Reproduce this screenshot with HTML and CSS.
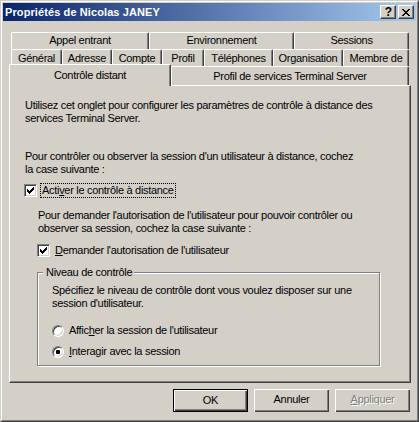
FILE: index.html
```html
<!DOCTYPE html>
<html lang="fr">
<head>
<meta charset="utf-8">
<title>Propriétés de Nicolas JANEY</title>
<link rel="stylesheet" href="styles.css">
</head>
<body>
<div class="window">
  <div class="frame">
    <div class="titlebar">
      <span class="title">Propriétés de Nicolas JANEY</span>
      <div class="caption-buttons">
        <span class="cap-btn help">?</span>
        <span class="cap-btn close"><svg width="8" height="7" viewBox="0 0 8 7"><path d="M0 0h2v1H0zM6 0h2v1H6zM1 1h2v1H1zM5 1h2v1H5zM2 2h4v1H2zM3 3h2v1H3zM2 4h4v1H2zM1 5h2v1H1zM5 5h2v1H5zM0 6h2v1H0zM6 6h2v1H6z" fill="#000"/></svg></span>
      </div>
    </div>
    <div class="client">
      <div class="tabs">
        <div class="tab-row row-back">
          <div class="tab t-appel">Appel entrant</div>
          <div class="tab t-env">Environnement</div>
          <div class="tab t-sessions">Sessions</div>
        </div>
        <div class="tab-row row-mid">
          <div class="tab t-general">Général</div>
          <div class="tab t-adresse">Adresse</div>
          <div class="tab t-compte">Compte</div>
          <div class="tab t-profil">Profil</div>
          <div class="tab t-tel">Téléphones</div>
          <div class="tab t-org">Organisation</div>
          <div class="tab t-membre">Membre de</div>
        </div>
        <div class="tab-row row-front">
          <div class="tab selected t-controle">Contrôle distant</div>
          <div class="tab front t-ts">Profil de services Terminal Server</div>
        </div>
      </div>
      <div class="panel">
        <p class="text p-intro">Utilisez cet onglet pour configurer les paramètres de contrôle à distance des<br>services Terminal Server.</p>
        <p class="text p-control">Pour contrôler ou observer la session d'un utilisateur à distance, cochez<br>la case suivante :</p>
        <div class="check-row row-enable">
          <span class="checkbox"><svg width="7" height="7" viewBox="0 0 7 7"><path d="M0 2h1v3H0zM1 3h1v3H1zM2 4h1v3H2zM3 3h1v3H3zM4 2h1v3H4zM5 1h1v3H5zM6 0h1v3H6z" fill="#000"/></svg></span>
          <span class="label focused">Acti<u>v</u>er le contrôle à distance</span>
        </div>
        <div class="indent">
          <p class="text p-ask">Pour demander l'autorisation de l'utilisateur pour pouvoir contrôler ou<br>observer sa session, cochez la case suivante :</p>
          <div class="check-row row-ask">
            <span class="checkbox"><svg width="7" height="7" viewBox="0 0 7 7"><path d="M0 2h1v3H0zM1 3h1v3H1zM2 4h1v3H2zM3 3h1v3H3zM4 2h1v3H4zM5 1h1v3H5zM6 0h1v3H6z" fill="#000"/></svg></span>
            <span class="label"><u>D</u>emander l'autorisation de l'utilisateur</span>
          </div>
          <div class="group">
            <div class="legend">Niveau de contrôle</div>
            <p class="text p-level">Spécifiez le niveau de contrôle dont vous voulez disposer sur une<br>session d'utilisateur.</p>
            <div class="radio-row row-view">
              <span class="radio"></span>
              <span class="rlabel">Affic<u>h</u>er la session de l'utilisateur</span>
            </div>
            <div class="radio-row row-interact">
              <span class="radio checked"></span>
              <span class="rlabel"><u>I</u>nteragir avec la session</span>
            </div>
          </div>
        </div>
      </div>
      <div class="buttons">
        <div class="btn default">OK</div>
        <div class="btn">Annuler</div>
        <div class="btn disabled"><span><u>A</u>ppliquer</span></div>
      </div>
    </div>
  </div>
</div>
</body>
</html>
```

FILE: styles.css
```css
* { box-sizing: border-box; }
html, body { margin: 0; padding: 0; background: #D4D0C8; }
body {
  font-family: "Liberation Sans", Arial, sans-serif;
  font-size: 11px;
  line-height: 13px;
  letter-spacing: -0.3px;
  color: #000;
}

.window {
  width: 419px;
  height: 422px;
  background: #D4D0C8;
  border: 1px solid;
  border-color: #D4D0C8 #404040 #404040 #D4D0C8;
}
.frame {
  height: 100%;
  border: 1px solid;
  border-color: #FFFFFF #808080 #808080 #FFFFFF;
  padding: 1px;
}

/* Title bar */
.titlebar {
  height: 18px;
  display: flex;
  align-items: flex-start;
  background: linear-gradient(to right, #0A246A, #A6CAF0);
  padding-left: 2px;
}
.title {
  color: #fff;
  font-weight: bold;
  font-size: 11px;
  line-height: 18px;
  letter-spacing: 0.1px;
  white-space: nowrap;
}
.caption-buttons {
  margin-left: auto;
  margin-top: 2px;
  margin-right: 2px;
  display: flex;
  gap: 2px;
}
.cap-btn {
  width: 16px;
  height: 14px;
  background: #D4D0C8;
  border: 1px solid;
  border-color: #FFFFFF #404040 #404040 #FFFFFF;
  box-shadow: inset -1px -1px 0 #808080;
  display: flex;
  align-items: center;
  justify-content: center;
}
.help {
  font-weight: bold;
  font-size: 12px;
  line-height: 12px;
  letter-spacing: 0;
  padding-left: 1px;
}
.close svg { display: block; margin-top: 1px; }

/* Client */
.client {
  padding: 11px 5px 0 6px;
}

/* Tabs */
.tab-row {
  display: flex;
  padding: 0 2px;
}
.row-back, .row-mid { height: 17px; }
.row-front {
  height: 21px;
  margin-top: -2px;
  padding-left: 0;
  align-items: flex-end;
}
.tab {
  height: 17px;
  flex: none;
  text-align: center;
  white-space: nowrap;
  background: #D4D0C8;
  border-top: 1px solid #FFFFFF;
  border-left: 1px solid #FFFFFF;
  border-right: 1px solid #404040;
  box-shadow: inset -1px 0 0 #808080;
  border-radius: 2px 2px 0 0;
  padding-top: 2px;
}
.row-back .tab { padding-top: 1px; }
.tab.front {
  height: 19px;
  padding-top: 3px;
}
.tab.selected {
  position: relative;
  z-index: 1;
  height: 22px;
  margin-bottom: -1px;
  padding-top: 4px;
}
.t-appel { width: 138px; }
.t-env { width: 145px; }
.t-sessions { width: 115px; }
.t-general { width: 51px; }
.t-adresse { width: 50px; }
.t-compte { width: 50px; }
.t-profil { width: 42px; }
.t-tel { width: 69px; }
.t-org { width: 70px; }
.t-membre { width: 66px; }
.t-controle { width: 162px; }
.t-ts { flex: 1 1 auto; }

/* Panel */
.panel {
  height: 298px;
  border: 1px solid;
  border-color: #FFFFFF #404040 #404040 #FFFFFF;
  box-shadow: inset -1px -1px 0 #808080;
  padding: 0 0 0 14px;
}
.text {
  margin: 0;
  white-space: nowrap;
}
.p-intro { margin-top: 13px; padding-left: 1px; }
.p-control { margin-top: 25px; padding-left: 1px; }

.check-row {
  display: flex;
  align-items: flex-start;
  height: 15px;
}
.row-enable { margin-top: 7px; }
.checkbox {
  flex: none;
  width: 13px;
  height: 13px;
  margin-top: 1px;
  background: #FFFFFF;
  border: 1px solid;
  border-color: #808080 #FFFFFF #FFFFFF #808080;
  box-shadow: inset 1px 1px 0 #404040, inset -1px -1px 0 #D4D0C8;
  padding: 2px 0 0 2px;
}
.checkbox svg { display: block; }
.label {
  margin-left: 3px;
  border: 1px solid transparent;
  padding: 0 1px;
  height: 15px;
  white-space: nowrap;
}
.label.focused { border: 1px dotted #000; }

.indent { margin-left: 13px; }
.p-ask { margin-top: 11px; padding-left: 1px; }
.row-ask { margin-top: 8px; }

/* Group box */
.group {
  margin-top: 14px;
  width: 343px;
  height: 94px;
  border: 1px solid #808080;
  box-shadow: inset 1px 1px 0 #FFFFFF, 1px 1px 0 #FFFFFF;
  padding-left: 13px;
}
.legend {
  width: fit-content;
  margin: -7px 0 0 -8px;
  padding: 0 2px 0 3px;
  background: #D4D0C8;
  white-space: nowrap;
}
.p-level { margin-top: 5px; padding-left: 1px; }

.radio-row {
  display: flex;
  align-items: flex-start;
  height: 13px;
}
.row-view { margin-top: 14px; }
.row-interact { margin-top: 8px; }
.radio {
  flex: none;
  width: 12px;
  height: 12px;
  margin-top: 1px;
  margin-left: 1px;
  border-radius: 50%;
  background: #FFFFFF;
  border: 1px solid;
  border-color: #808080 #FFFFFF #FFFFFF #808080;
  box-shadow: inset 1px 1px 0 #404040, inset -1px -1px 0 #D4D0C8;
  display: flex;
  align-items: center;
  justify-content: center;
}
.radio.checked::after {
  content: "";
  width: 4px;
  height: 4px;
  border-radius: 1px;
  background: #000;
}
.rlabel {
  margin-left: 5px;
  white-space: nowrap;
}

/* Buttons */
.buttons {
  display: flex;
  justify-content: flex-end;
  gap: 6px;
  margin-top: 6px;
  margin-right: 1px;
}
.btn {
  width: 75px;
  height: 23px;
  display: flex;
  align-items: center;
  justify-content: center;
  padding-bottom: 2px;
  background: #D4D0C8;
  box-shadow: inset 1px 1px 0 #FFFFFF, inset -1px -1px 0 #404040, inset -2px -2px 0 #808080;
}
.btn.default {
  border: 1px solid #000;
  padding-bottom: 0;
}
.btn.disabled {
  color: #808080;
  text-shadow: 1px 1px 0 #FFFFFF;
}
```
